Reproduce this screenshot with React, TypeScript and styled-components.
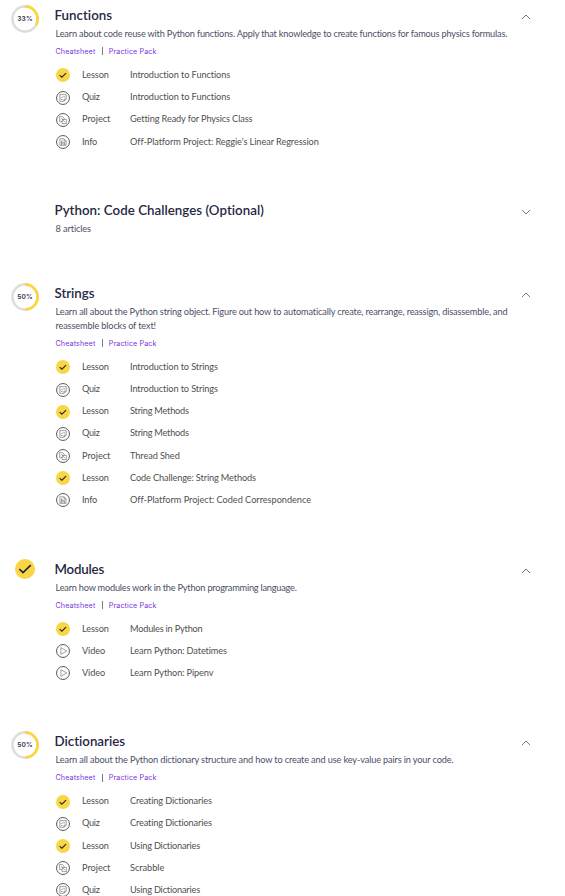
import React from "react";
import styled, { createGlobalStyle } from "styled-components";

const GlobalStyle = createGlobalStyle`
  html, body { margin: 0; background: #fff; overflow: hidden; }
  * { box-sizing: border-box; }
`;

const Page = styled.main`
  width: 565px;
  height: 896px;
  overflow: hidden;
  padding: 6.15px 32px 0 11px;
  font-family: Lato, sans-serif;
  font-size: 9.2px;
  font-variant-ligatures: none;
  color: #505050;
`;

const Section = styled.section<{ $gap: number }>`
  display: grid;
  grid-template-columns: 28px 1fr 14px;
  column-gap: 16px;
  margin-bottom: ${(p) => p.$gap}px;
`;

const Status = styled.div<{ $done?: boolean }>`
  height: 28px;
  margin-top: ${(p) => (p.$done ? "-5px" : "-1px")};
  display: flex;
  align-items: center;
  justify-content: center;
`;

const Content = styled.div`
  min-width: 0;
`;

const Title = styled.h2<{ $ls: number }>`
  margin: 0 0 0 -0.5px;
  height: 18px;
  line-height: 18px;
  font-size: 13.3px;
  font-weight: 600;
  white-space: nowrap;
  color: #262843;
  letter-spacing: ${(p) => p.$ls}px;
`;

const Description = styled.p`
  margin: 3px 0 0 0.5px;
  line-height: 14px;
  color: #4c4f66;
`;

const Line = styled.span<{ $ls: number }>`
  display: block;
  white-space: nowrap;
  letter-spacing: ${(p) => p.$ls}px;
`;

const Links = styled.div`
  display: flex;
  align-items: center;
  height: 14px;
  margin: 3.3px 0 0 0.5px;
`;

const ResourceLink = styled.a`
  font-family: Inter, sans-serif;
  font-size: 7.2px;
  font-weight: 400;
  color: #7a35e0;
  white-space: nowrap;
  letter-spacing: 0.1px;
`;

const Divider = styled.span`
  width: 1px;
  height: 8px;
  margin: 0 6px 0 6.4px;
  background: #77788a;
`;

const List = styled.ul`
  list-style: none;
  margin: 5.7px 0 0 1px;
  padding: 0;
`;

const Row = styled.li`
  display: grid;
  grid-template-columns: 26px 48px 1fr;
  height: 22.16px;
  line-height: 22px;
  white-space: nowrap;
`;

const IconSlot = styled.span`
  display: flex;
  align-items: center;
  padding-top: 0.5px;
`;

const Label = styled.span<{ $ls: number }>`
  letter-spacing: ${(p) => p.$ls}px;
`;

const Toggle = styled.span`
  display: flex;
  align-items: center;
  justify-content: center;
  height: 21.8px;
`;

type Kind = "Lesson" | "Quiz" | "Project" | "Info" | "Video";
type Text = [string, number];
type Item = [Kind, string, number];

interface Module {
  title: Text;
  percent?: number;
  gap?: number;
  lines: Text[];
  items?: Item[];
}

const kindSpacing: Record<Kind, number> = { Lesson: -0.12, Quiz: -0.3, Project: -0.03, Info: -0.2, Video: -0.1 };

const modules: Module[] = [
  {
    title: ["Functions", 0.03],
    percent: 33,
    lines: [["Learn about code reuse with Python functions. Apply that knowledge to create functions for famous physics formulas.", -0.185]],
    items: [
      ["Lesson", "Introduction to Functions", -0.08],
      ["Quiz", "Introduction to Functions", -0.08],
      ["Project", "Getting Ready for Physics Class", -0.12],
      ["Info", "Off-Platform Project: Reggie's Linear Regression", -0.08],
    ],
  },
  { title: ["Python: Code Challenges (Optional)", 0.03], lines: [["8 articles", -0.1]] },
  {
    title: ["Strings", -0.05],
    percent: 50,
    gap: 48.7,
    lines: [
      ["Learn all about the Python string object. Figure out how to automatically create, rearrange, reassign, disassemble, and", -0.155],
      ["reassemble blocks of text!", -0.15],
    ],
    items: [
      ["Lesson", "Introduction to Strings", -0.11],
      ["Quiz", "Introduction to Strings", -0.11],
      ["Lesson", "String Methods", -0.22],
      ["Quiz", "String Methods", -0.22],
      ["Project", "Thread Shed", -0.08],
      ["Lesson", "Code Challenge: String Methods", -0.13],
      ["Info", "Off-Platform Project: Coded Correspondence", -0.03],
    ],
  },
  {
    title: ["Modules", -0.2],
    percent: 100,
    gap: 48,
    lines: [["Learn how modules work in the Python programming language.", -0.215]],
    items: [
      ["Lesson", "Modules in Python", -0.2],
      ["Video", "Learn Python: Datetimes", -0.12],
      ["Video", "Learn Python: Pipenv", -0.12],
    ],
  },
  {
    title: ["Dictionaries", 0],
    percent: 50,
    lines: [["Learn all about the Python dictionary structure and how to create and use key-value pairs in your code.", -0.14]],
    items: [
      ["Lesson", "Creating Dictionaries", -0.13],
      ["Quiz", "Creating Dictionaries", -0.13],
      ["Lesson", "Using Dictionaries", -0.18],
      ["Project", "Scrabble", -0.03],
      ["Quiz", "Using Dictionaries", -0.18],
    ],
  },
];

const RingBox = styled.div`
  display: grid;
  width: 28px;
  height: 28px;
  > * { grid-area: 1 / 1; }
`;

const Percent = styled.span`
  place-self: center;
  font-family: Inter, sans-serif;
  font-size: 6.6px;
  font-weight: 600;
  color: #30324a;
  letter-spacing: 0.2px;
`;

const Ring = ({ percent }: { percent: number }) => (
  <RingBox>
    <svg width="28" height="28" viewBox="0 0 28 28" fill="none" strokeWidth="2.7">
      <circle cx="14" cy="14" r="12.6" stroke="#dedede" />
      <circle cx="14" cy="14" r="12.6" stroke="#fbd63c" pathLength="100" strokeDasharray={`${percent} 100`} transform="rotate(-90 14 14)" />
    </svg>
    <Percent>{percent}%</Percent>
  </RingBox>
);

const CheckBadge = ({ size }: { size: number }) => (
  <svg width={size} height={size} viewBox="0 0 20 20">
    <circle cx="10" cy="10" r="10" fill="#f9d644" />
    <path d={size > 15 ? "M4.4 10.2 8 13.6 15.8 6.2" : "M5.2 10.2 8.4 13.2 14.4 7.2"} fill="none" stroke="#20223c" strokeWidth={size > 15 ? 1.6 : 1.5} />
  </svg>
);

const glyphs: Record<Exclude<Kind, "Lesson">, React.ReactNode> = {
  Quiz: <path d="M3.8 3.6h6.4v4.5L8.1 10.3H3.8zM8.1 10.2V8.1h2M4.8 6.2l.8.8 1.2-1.4M7.4 5.8h1.8M4.9 8.5h1.8" />,
  Project: <path d="M3.6 3.6h3l1.5 1.6v1.2h2.3v4.2H6.2V8.6H3.6zM5.2 5.2l3.8 4M6.2 8.6V6.4h1.9" />,
  Info: <path d="M3.9 3.8h4.2l2 2v4.5H3.9zM8.1 3.8V6h2M5.4 6h1.2M5.4 7.4h3.2v2.9M5.4 8.9h3.2M5.4 6v4.3" />,
  Video: <path d="M4.9 3.7v6.6L10.8 7z" />,
};

const KindIcon = ({ kind }: { kind: Kind }) =>
  kind === "Lesson" ? (
    <CheckBadge size={14} />
  ) : (
    <svg width="14" height="14" viewBox="0 0 14 14" fill="none">
      <circle cx="7" cy="7" r="6.45" stroke="#585858" strokeWidth="1" />
      <g stroke="#707070" strokeWidth="0.65">{glyphs[kind]}</g>
    </svg>
  );

const Chevron = ({ open }: { open: boolean }) => (
  <svg width="10" height="6" viewBox="0 0 10 6" fill="none" stroke="#73748a" strokeWidth="1">
    <path d={open ? "M1 5 5 1 9 5" : "M1 1 5 5 9 1"} />
  </svg>
);

export default function App() {
  return (
    <Page>
      <GlobalStyle />
      {modules.map(({ title, percent, gap = 48.15, lines, items }) => (
        <Section key={title[0]} $gap={gap}>
          <Status $done={percent === 100}>
            {percent === 100 ? <CheckBadge size={20} /> : percent ? <Ring percent={percent} /> : null}
          </Status>
          <Content>
            <Title $ls={title[1]}>{title[0]}</Title>
            <Description>
              {lines.map(([text, ls]) => (
                <Line key={text} $ls={ls}>{text}</Line>
              ))}
            </Description>
            {items && (
              <>
                <Links>
                  <ResourceLink>Cheatsheet</ResourceLink>
                  <Divider />
                  <ResourceLink>Practice Pack</ResourceLink>
                </Links>
                <List>
                  {items.map(([kind, name, ls]) => (
                    <Row key={kind + name}>
                      <IconSlot><KindIcon kind={kind} /></IconSlot>
                      <Label $ls={kindSpacing[kind]}>{kind}</Label>
                      <Label $ls={ls}>{name}</Label>
                    </Row>
                  ))}
                </List>
              </>
            )}
          </Content>
          <Toggle><Chevron open={!!items} /></Toggle>
        </Section>
      ))}
    </Page>
  );
}
